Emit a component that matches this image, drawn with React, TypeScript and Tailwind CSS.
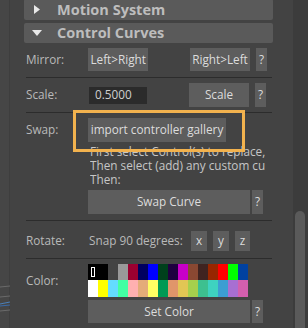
import React from "react";

const font = { fontFamily: '"Open Sans", "Noto Sans", sans-serif' };

const row1 = [
  "#000000", "#000000", "#434343", "#999999", "#9b0030", "#000060", "#0000ff", "#00401c",
  "#200040", "#c800c8", "#8a4832", "#3f2320", "#992600", "#ff0000", "#00ff00", "#0041a0",
];
const row2 = [
  "#ffffff", "#ffff00", "#64dcff", "#43ffa3", "#ffb0b0", "#e4ac79", "#ffff63", "#009954",
  "#e0966a", "#e2c654", "#a5d04d", "#3dc08f", "#3ed2c0", "#3c9ed2", "#a86fd2", "#d45fae",
];

const Btn: React.FC<{ w: string; align?: string; children: React.ReactNode }> = ({
  w,
  align = "justify-center",
  children,
}) => (
  <div
    className={`${w} h-full shrink-0 bg-[#5d5d5d] text-[#dcdcdc] text-[11.75px] flex items-center ${align} whitespace-nowrap overflow-hidden`}
  >
    {children}
  </div>
);

const Sep = () => <div className="h-px bg-[#2c2c2c] ml-[2px] mr-px" />;

const Label: React.FC<{ children: React.ReactNode }> = ({ children }) => (
  <div className="w-[62px] shrink-0 text-[#b9b9b9] text-[11.75px]">{children}</div>
);

export default function App() {
  return (
    <div className="flex w-[308px] h-[328px] overflow-hidden bg-[#434343]" style={font}>
      {/* strip of the graph editor behind */}
      <div className="w-[10px] bg-[#464646] border-r border-[#3e3e3e] relative shrink-0">
        <svg className="absolute left-0 top-[284px]" width="10" height="30">
          <path d="M0 3 L10 2" stroke="#6a6a6a" strokeWidth="1" />
          <path d="M0 13 L10 12" stroke="#6a6a6a" strokeWidth="1" />
          <path d="M0 20 L10 18" stroke="#4a7fb8" strokeWidth="1" />
          <path d="M0 22 L10 21" stroke="#3a6aa8" strokeWidth="1" />
          <path d="M0 27 L10 26" stroke="#6a6a6a" strokeWidth="1" />
        </svg>
      </div>

      <div className="flex-1 relative pl-[14px] pr-[20px]">
        <div className="flex flex-col">
          {/* section headers */}
          <div className="mt-[-1px] h-[21px] bg-[#5a5a5a] rounded-[2px] flex items-center">
            <svg className="ml-[10px]" width="6" height="9" viewBox="0 0 6 9">
              <path d="M0 0 L6 4.5 L0 9 Z" fill="#e8e8e8" />
            </svg>
            <span className="ml-[17px] text-[14.5px] font-bold text-[#bdbdbd]">Motion System</span>
          </div>
          <div className="mt-[3px] h-[20px] bg-[#5a5a5a] rounded-[2px] flex items-center">
            <svg className="ml-[8px]" width="10" height="6" viewBox="0 0 10 6">
              <path d="M0 0 L10 0 L5 6 Z" fill="#e8e8e8" />
            </svg>
            <span className="ml-[15px] text-[14.5px] font-bold text-[#bdbdbd]">Control Curves</span>
          </div>

          {/* Mirror */}
          <div className="mt-[5px] h-[23px] flex items-center pl-[2px]">
            <Label>Mirror:</Label>
            <Btn w="w-[60px]" align="justify-end pr-[2px]">
              <span className="-ml-[6px]">Left&gt;Right</span>
            </Btn>
            <div className="w-[42px] shrink-0" />
            <Btn w="w-[60px]">Right&gt;Left</Btn>
            <div className="w-[6px] shrink-0" />
            <Btn w="w-[11px]">?</Btn>
          </div>
          <div className="mt-[6px]" />
          <Sep />

          {/* Scale */}
          <div className="mt-[5px] h-[24px] flex items-center pl-[2px]">
            <Label>Scale:</Label>
            <div className="w-[58px] h-[17px] ml-px shrink-0 bg-[#2b2b2b] text-[#cfcfcf] text-[11.75px] flex items-center pl-[6px]">
              0.5000
            </div>
            <div className="w-[42px] shrink-0" />
            <Btn w="w-[60px]">Scale</Btn>
            <div className="w-[6px] shrink-0" />
            <Btn w="w-[11px]">?</Btn>
          </div>
          <div className="mt-[5px]" />
          <Sep />

          {/* Swap */}
          <div className="mt-[5px] h-[24px] flex items-center pl-[2px]">
            <Label>Swap:</Label>
            <Btn w="w-[138px]">import controller gallery</Btn>
          </div>
          <div className="ml-[66px] mt-[2px] text-[11.75px] leading-[14px] text-[#c6c6c6] whitespace-nowrap overflow-hidden">
            <div>First select Control(s) to replace,</div>
            <div>Then select (add) any custom cu</div>
            <div>Then:</div>
          </div>
          <div className="mt-[4px] h-[24px] flex items-center pl-[64px]">
            <Btn w="w-[162px]">Swap Curve</Btn>
            <div className="w-[2px] shrink-0" />
            <Btn w="w-[11px]">?</Btn>
          </div>
          <div className="mt-[6px]" />
          <Sep />

          {/* Rotate */}
          <div className="mt-[10px] h-[20px] flex items-center pl-[2px]">
            <Label>Rotate:</Label>
            <div className="w-[97px] shrink-0 pl-px text-[11.75px] text-[#b9b9b9] whitespace-nowrap">
              Snap 90 degrees:
            </div>
            <div className="ml-[6px] flex gap-[6px] h-full">
              <Btn w="w-[16px]">x</Btn>
              <Btn w="w-[16px]">y</Btn>
              <Btn w="w-[15px]">z</Btn>
            </div>
          </div>
          <div className="mt-[7px]" />
          <Sep />

          {/* Color */}
          <div className="mt-[5px] flex items-center pl-[2px]">
            <Label>Color:</Label>
            <div className="flex flex-col">
              <div className="flex h-[16px]">
                {row1.map((c, i) => (
                  <div key={i} className="w-[10px] h-full relative" style={{ backgroundColor: c }}>
                    {i === 0 && (
                      <div className="absolute left-[3px] top-[3px] w-[4px] h-[10px] border border-white" />
                    )}
                  </div>
                ))}
              </div>
              <div className="flex h-[17px]">
                {row2.map((c, i) => (
                  <div key={i} className="w-[10px] h-full" style={{ backgroundColor: c }} />
                ))}
              </div>
            </div>
          </div>
          <div className="mt-[3px] h-[23px] flex items-center pl-[64px]">
            <Btn w="w-[162px]">Set Color</Btn>
            <div className="w-[2px] shrink-0" />
            <Btn w="w-[11px]">?</Btn>
          </div>
        </div>

        {/* highlight around the gallery button */}
        <div className="absolute left-[63px] top-[110px] w-[172px] h-[42px] border-[3px] border-[#f2b24e]" />
      </div>

      {/* scrollbar */}
      <div className="w-[15px] shrink-0 bg-[#3c3c3c] relative">
        <div className="absolute left-[2px] top-[211px] w-[10px] h-[130px] rounded-full bg-[#5a5a5a]" />
      </div>
    </div>
  );
}
